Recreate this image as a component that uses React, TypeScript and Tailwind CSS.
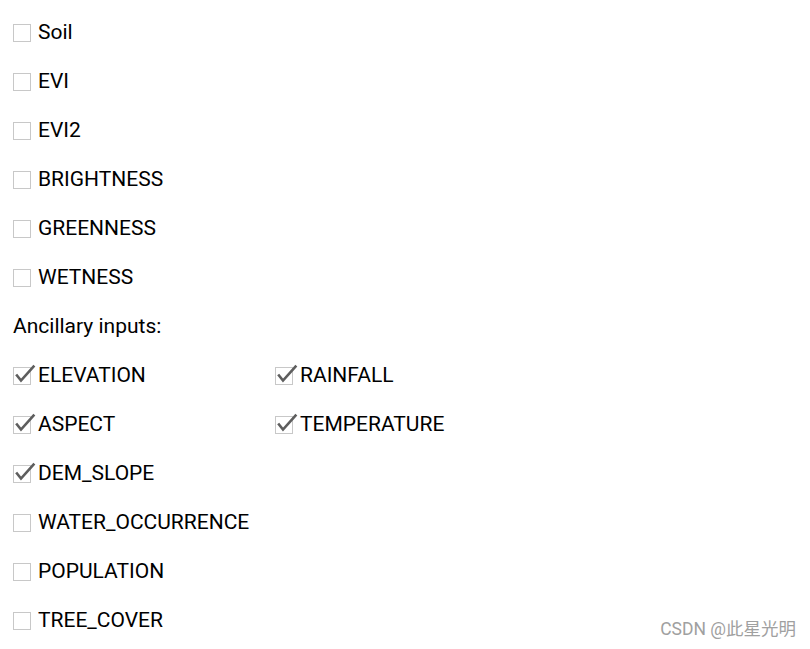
const topInputs = ["Soil", "EVI", "EVI2", "BRIGHTNESS", "GREENNESS", "WETNESS"];

const ancillary: [string, boolean][][] = [
  [
    ["ELEVATION", true],
    ["RAINFALL", true],
  ],
  [
    ["ASPECT", true],
    ["TEMPERATURE", true],
  ],
  [["DEM_SLOPE", true]],
  [["WATER_OCCURRENCE", false]],
  [["POPULATION", false]],
  [["TREE_COVER", false]],
];

const Box = ({ checked }: { checked: boolean }) => (
  <svg width="22" height="20" viewBox="0 0 22 20" className="shrink-0 overflow-visible">
    <rect x="0.5" y="1.5" width="17" height="17" fill="white" stroke="#c8c8c8" />
    {checked && (
      <path
        d="M4 9.5 L8 14.5 L20.5 0.5"
        fill="none"
        stroke="#5e5e5e"
        strokeWidth="2.6"
        strokeLinecap="square"
        strokeLinejoin="miter"
      />
    )}
  </svg>
);

const Item = ({ label, checked }: { label: string; checked: boolean }) => (
  <label className="flex items-center gap-[3px] w-[262px]">
    <Box checked={checked} />
    <span>{label}</span>
  </label>
);

export default function App() {
  return (
    <main className="relative w-[810px] h-[649px] bg-white text-[21px] text-black font-['Roboto',sans-serif] pl-[13px] pt-[8px]">
      {topInputs.map((t) => (
        <div key={t} className="h-[49px] flex items-center">
          <Item label={t} checked={false} />
        </div>
      ))}
      <div className="h-[49px] flex items-center">Ancillary inputs:</div>
      {ancillary.map((row, i) => (
        <div key={i} className="h-[49px] flex items-center">
          {row.map(([l, c]) => (
            <Item key={l} label={l} checked={c} />
          ))}
        </div>
      ))}
      <div className="absolute right-[14px] bottom-[7px] text-[17.5px] text-[#a0a0a0] font-['Roboto','Noto_Sans_CJK_SC',sans-serif]">
        CSDN @此星光明
      </div>
    </main>
  );
}
